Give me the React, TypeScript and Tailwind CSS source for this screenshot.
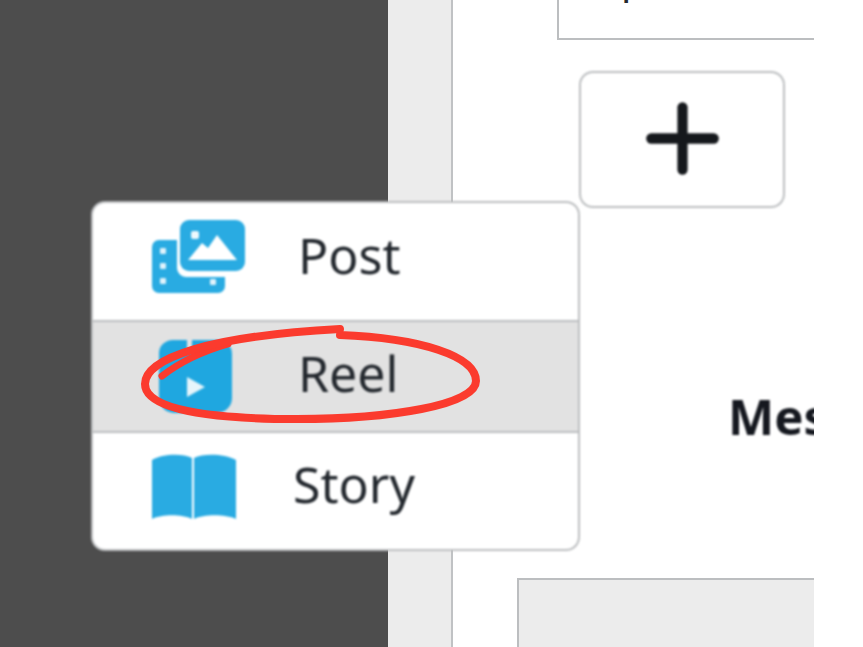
import React from 'react';
import { Plus } from 'lucide-react';

const font = 'font-["Noto_Sans",sans-serif]';

const PostIcon = () => (
  <svg width="94" height="76" viewBox="0 0 94 76" className="block">
    <path fill="#29abe2" d="M7 21h18v28a9 9 0 0 0 9 9h39v9a7 7 0 0 1-7 7H7a7 7 0 0 1-7-7V28a7 7 0 0 1 7-7z" />
    <rect x="8" y="29" width="6" height="6" rx="1" fill="#dff2fb" />
    <rect x="8" y="44" width="6" height="6" rx="1" fill="#dff2fb" />
    <rect x="8" y="59" width="6" height="6" rx="1" fill="#dff2fb" />
    <rect x="58" y="60" width="6" height="6" rx="1" fill="#dff2fb" />
    <rect x="28" y="1" width="65" height="51" rx="9" fill="#29abe2" />
    <rect x="39" y="12" width="8" height="8" rx="2" fill="#eef9fd" />
    <path fill="#fff" d="M36 41l14-17 6 5 9-13 20 25z" />
  </svg>
);

const ReelIcon = () => (
  <svg width="76" height="76" viewBox="0 0 76 76" className="block">
    <path fill="#1fa7e0" d="M16 2h14v13h5V2h26a14 14 0 0 1 14 14v44a15 15 0 0 1-15 15H17A15 15 0 0 1 2 60V15A14 13 0 0 1 16 2z" />
    <path fill="#e6f5fb" d="M30 39l18 10-18 10z" />
  </svg>
);

const StoryIcon = () => (
  <svg width="84" height="66" viewBox="0 0 84 66" className="block">
    <path fill="#29abe2" d="M0 6C10 0 30-1 40 4v61c-10-5-30-5-40 0z" />
    <path fill="#29abe2" d="M42 4c10-5 31-4 42 2v59c-11-5-32-5-42 0z" />
  </svg>
);

export default function App() {
  return (
    <div className={`relative h-screen w-full overflow-hidden bg-white ${font}`}>
      <div className="h-full flex">
        <div className="w-[388px] bg-[#4d4d4d]" />
        <div className="w-[63px] bg-[#ececec]" />
        <main className="w-[363px] border-l-2 border-[#c0c2c4] bg-white overflow-hidden flex flex-col">
          <div className="ml-[104px] h-[40px] w-[400px] shrink-0 border-l-2 border-b-2 border-[#bcbec0] overflow-hidden">
            <div className="ml-[62px] -mt-[46px] text-[40px] leading-[48px] text-[#24292e]">p</div>
          </div>
          <button className="ml-[126px] mt-[31px] w-[206px] h-[137px] shrink-0 rounded-[14px] border-2 border-[#bcbec0] flex items-center justify-center text-[#15181c] blur-[0.8px]">
            <Plus size={107} strokeWidth={2.3} className="-mt-[2px]" />
          </button>
          <div className="ml-[275px] mt-[178px] w-[300px] shrink-0 text-[49px] leading-[60px] font-bold text-[#15181f] whitespace-nowrap blur-[0.8px]">
            Message
          </div>
          <div className="ml-[64px] mt-[132px] w-[400px] flex-1 border-l-2 border-t-2 border-[#bcbec0] bg-[#ececec]" />
        </main>
      </div>

      {/* Popup menu */}
      <div className="absolute left-[91px] top-[201px] w-[489px] h-[350px] rounded-[14px] border-2 border-[#bcbec0] bg-white overflow-hidden flex flex-col text-[50px] text-[#23282e] blur-[0.8px]">
        <div className="h-[119px] shrink-0 flex items-center border-b-2 border-[#bcbec0]">
          <div className="ml-[59px] w-[146px] shrink-0 -mt-[9px]"><PostIcon /></div>
          <span className="leading-none -mt-[13px]">Post</span>
        </div>
        <div className="h-[111px] shrink-0 flex items-center border-b-2 border-[#bcbec0] bg-[#e2e2e2]">
          <div className="ml-[64px] w-[141px] shrink-0 -mt-[2px]"><ReelIcon /></div>
          <span className="leading-none -mt-[8px]">Reel</span>
        </div>
        <div className="flex-1 flex items-center">
          <div className="ml-[59px] w-[141px] shrink-0 -mt-[8px]"><StoryIcon /></div>
          <span className="leading-none -mt-[14px]">Story</span>
        </div>
      </div>

      {/* Red annotation */}
      <svg className="absolute left-0 top-0 pointer-events-none" width="863" height="647" viewBox="0 0 863 647" fill="none">
        <path d="M162 376C180 362 200 352 228 344" stroke="#fb3b2e" strokeWidth="7" strokeLinecap="round" />
        <path d="M340 335C420 338 476 356 476 381C476 405 390 419 297 419C210 419 145 410 145 384C145 358 210 336 340 329" stroke="#fb3b2e" strokeWidth="8" strokeLinecap="round" />
      </svg>
    </div>
  );
}
